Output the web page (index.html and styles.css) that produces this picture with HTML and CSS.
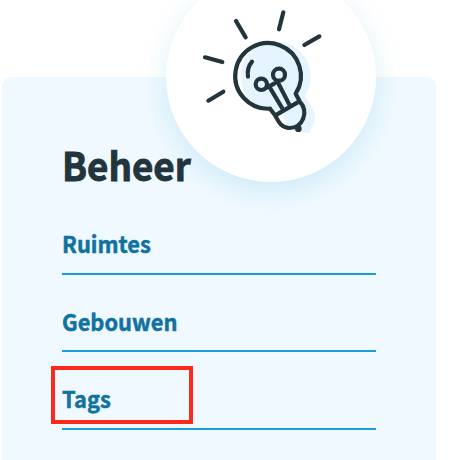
FILE: index.html
```html
<!DOCTYPE html>
<html lang="nl">
<head>
<meta charset="utf-8">
<title>Beheer</title>
<link rel="stylesheet" href="styles.css">
</head>
<body>
<main class="card">
  <div class="badge">
    <svg class="bulb" viewBox="0 0 435 435" aria-hidden="true">
      <path class="shade" d="M266 334A105 105 0 1 1 344 288L360 312Q386 349 368 372L358 399L336 396Q300 394 285 360Z"/>
      <g class="ink">
        <path d="M240 326A98.500 98.500 0 1 1 317 281L329 304C358 336 338 385 298 384C270 383 263 359 254 344L240 326M256 346L328 304"/>
        <path d="M174 230Q170 204 186 185M277 325L236 257M298 314L263 246M228 264L254 250"/>
        <circle cx="214" cy="253" r="17"/>
        <circle cx="267" cy="224" r="18"/>
        <path d="M138 63L167 112M280 37L267 88M388 109L343 135M45 172L97 186M55 302L100 275"/>
      </g>
      <circle class="nub" cx="325" cy="386" r="10"/>
    </svg>
  </div>
  <h1 class="title"><span class="title-text">Beheer</span></h1>
  <nav class="links">
    <a class="link"><span class="label">Ruimtes</span></a>
    <a class="link"><span class="label">Gebouwen</span></a>
    <a class="link marked"><span class="label">Tags</span></a>
  </nav>
</main>
</body>
</html>
```
FILE: styles.css
```css
*, *::after { box-sizing: border-box; }
body {
  margin: 0;
  padding: 77px 16px 0 2px;
  height: 460px;
  overflow: hidden;
  background: #fff;
  font-family: "Noto Sans CJK SC", "Noto Sans", sans-serif;
}
.card {
  position: relative;
  height: 400px;
  padding: 59px 60px 0;
  border-radius: 9px;
  background: #f0f9ff;
}
.badge {
  position: absolute;
  left: 163.500px;
  top: -105.500px;
  width: 210.500px;
  height: 210.500px;
  border-radius: 50%;
  background: #fff;
  box-shadow: 0 9px 28px rgba(24, 160, 205, .16);
}
.bulb {
  position: absolute;
  left: 24.500px;
  top: 28.500px;
  width: 145px;
  height: 145px;
}
.ink {
  fill: none;
  stroke: #22343c;
  stroke-width: 12.500;
  stroke-linecap: round;
  stroke-linejoin: round;
}
.shade { fill: #e5f4fd; }
.nub { fill: #22343c; }
.title {
  position: relative;
  margin: 0 0 3px;
  height: 56px;
  font-size: 39px;
  line-height: 56px;
  color: #22343c;
}
.title-text, .label {
  display: inline-block;
  transform: scaleX(.95);
  transform-origin: 0 50%;
  -webkit-text-stroke: .5px currentColor;
}
.title-text {
  transform: scaleX(.943);
  -webkit-text-stroke-width: .9px;
}
.links { display: grid; grid-template-rows: 80px 77px 78px; }
.link {
  position: relative;
  display: flex;
  align-items: flex-end;
  padding-bottom: 14px;
  border-bottom: 2px solid #1a9cda;
  color: #10729f;
  font-size: 23px;
  font-weight: 700;
  line-height: 32px;
}
.link:nth-child(2) { padding-bottom: 13px; }
.marked::after {
  content: "";
  position: absolute;
  left: -11px;
  top: 14px;
  width: 142px;
  height: 58px;
  border: 4px solid #ff291b;
}
```
